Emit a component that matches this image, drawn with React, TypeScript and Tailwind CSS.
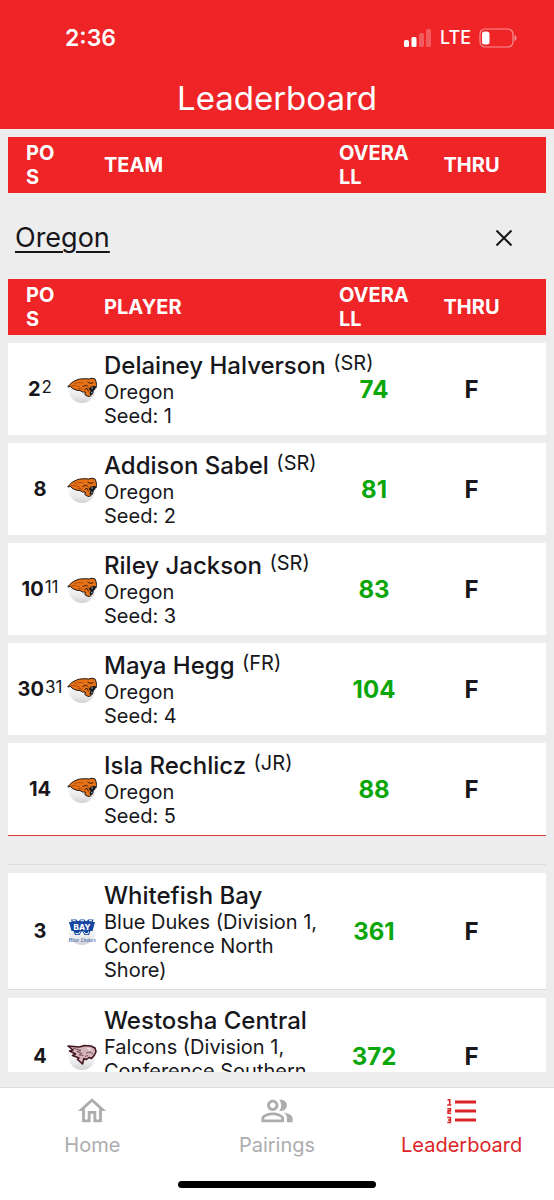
import React, { useId, useState } from 'react';
import { MdOutlineHome, MdOutlinePeopleAlt } from 'react-icons/md';

interface Player {
  pos: string;
  projected?: string;
  name: string;
  grade: string;
  team: string;
  seed: number;
  score: number;
  thru: string;
}

interface Team {
  pos: string;
  name: string;
  details: string;
  score: number;
  thru: string;
  logo: React.ComponentType;
}

const players: Player[] = [
  { pos: '2', projected: '2', name: 'Delainey Halverson', grade: 'SR', team: 'Oregon', seed: 1, score: 74, thru: 'F' },
  { pos: '8', name: 'Addison Sabel', grade: 'SR', team: 'Oregon', seed: 2, score: 81, thru: 'F' },
  { pos: '10', projected: '11', name: 'Riley Jackson', grade: 'SR', team: 'Oregon', seed: 3, score: 83, thru: 'F' },
  { pos: '30', projected: '31', name: 'Maya Hegg', grade: 'FR', team: 'Oregon', seed: 4, score: 104, thru: 'F' },
  { pos: '14', name: 'Isla Rechlicz', grade: 'JR', team: 'Oregon', seed: 5, score: 88, thru: 'F' },
];

const teams: Team[] = [
  {
    pos: '3',
    name: 'Whitefish Bay',
    details: 'Blue Dukes (Division 1, Conference North Shore)',
    score: 361,
    thru: 'F',
    logo: BlueDukesLogo,
  },
  {
    pos: '4',
    name: 'Westosha Central',
    details: 'Falcons (Division 1, Conference Southern Lakes)',
    score: 372,
    thru: 'F',
    logo: FalconsLogo,
  },
];

const tabs = [
  { label: 'Home', icon: MdOutlineHome },
  { label: 'Pairings', icon: MdOutlinePeopleAlt },
  { label: 'Leaderboard', icon: RankingIcon },
];

function RankingIcon({ className }: { className?: string }) {
  return (
    <svg viewBox="0 0 34 34" className={className} fill="none" stroke="currentColor" aria-hidden="true">
      <path d="M10 8H31M10 17H31M10 26H31" strokeWidth="2.800" />
      <path
        d="M2.500 5.800H4.700V11M2.200 11H6.300M2.300 14.700H5.400V16.900H3.100V19.300H6.200M2.300 23.500H5.400V28.500H2.300M3 26H5.400"
        strokeWidth="1.600"
      />
    </svg>
  );
}

// Golf ball that sits behind every team logo
function Ball() {
  const id = useId();
  return (
    <>
      <defs>
        <linearGradient id={id} x1="0" y1="0" x2="0" y2="1">
          <stop offset="0.3" stopColor="#ffffff" />
          <stop offset="0.75" stopColor="#e9e9eb" />
          <stop offset="1" stopColor="#d2d2d5" />
        </linearGradient>
      </defs>
      <circle cx="15" cy="14.5" r="13.5" fill={`url(#${id})`} />
    </>
  );
}

function PantherLogo() {
  return (
    <svg viewBox="0 0 30 30" className="block size-[30px]" role="img" aria-label="Oregon logo">
      <Ball />
      <path
        d="M.8 12C3 8.500 6 6.500 9.500 5C13 3.500 18 3.600 22 4L25 3.200L28 4L29 6.500L29.500 9.500L29 13L27.800 11.500L26 11.800L25 14.500L26 17L24.500 20L22.500 21.500L20 21L17.800 19.500L18.500 17L15.500 17L13 15.500L10 15.300L6 13.800L3.500 11.500Z"
        fill="#e87216"
        stroke="#1d1410"
        strokeWidth="1"
        strokeLinejoin="round"
      />
      <path d="M21.500 14L24 11.500L28.500 11.200L28.500 14L26.500 16L26 19L23 20L22.500 18L23.600 15.800Z" fill="#15181c" />
      <path d="M24.300 12.500L25 14.300L26 12.500M24 18.200L24.900 16.400L25.500 18" fill="#d5eaf0" />
      <path
        d="M7 9C10 7.300 14 7 17 8.300M4 11.200C7 10 10 10.800 13 12.200M11 13.300L15.500 14"
        fill="none"
        stroke="#a04a10"
        strokeWidth="0.8"
      />
      <path d="M15.500 11.500L19.500 10.200L21.500 12M20.500 7L24 8.500L26.500 7.300M17.500 14.500L20 13.300L21.500 16.500" fill="none" stroke="#2a160b" strokeWidth="0.9" />
    </svg>
  );
}

function BlueDukesLogo() {
  return (
    <svg viewBox="0 0 30 30" className="block size-[30px]" role="img" aria-label="Whitefish Bay logo">
      <Ball />
      <path
        d="M4 2.500H9.500L10.500 4H12L13 2.500H17.500L18.500 4H20L21 2.500H26.500L25.800 5H28L25.500 14H23.500L22 18H17.500L15.500 14.500H14.500L12.500 18H8L6.500 14H4.500L2 5H4.700Z"
        fill="#1746a0"
      />
      <path d="M5.500 3.700H8.700M13.500 3.700H17M22 3.700H25M8.300 16L9 16.700H11.800L13.200 14.500M16.800 14.500L18.200 16.700H21L21.700 14.500" fill="none" stroke="#fff" strokeWidth="1" />
      <text x="15" y="12.500" textAnchor="middle" fontSize="8" fontWeight="800" fill="#fff" fontFamily="Inter, sans-serif">
        BAY
      </text>
      <text
        x="15"
        y="25"
        textAnchor="middle"
        fontSize="6"
        fontStyle="italic"
        fill="#2b55a5"
        fontFamily="Liberation Serif, serif"
      >
        Blue Dukes
      </text>
    </svg>
  );
}

function FalconsLogo() {
  return (
    <svg viewBox="0 0 30 30" className="block size-[30px]" role="img" aria-label="Westosha Central logo">
      <Ball />
      <path
        d="M1 4L12.500 5L17.500 3.500L24 4L28 6L29 9.500L27.500 13L24.500 16.500L22 15.500L19.500 17.500L17 16.500L15.500 22L10.500 17.500L12 16L5.500 13.500L8.500 12L2.500 9L6 8Z"
        fill="#d3b4ba"
        stroke="#43161f"
        strokeWidth="1.600"
        strokeLinejoin="round"
      />
      <path
        d="M6 6L14 8.500L10 9.500L15 11.500L12 12.800L16.500 13.500M19 11L23 10L26 12M18 14.500L21 13.500"
        fill="none"
        stroke="#6b3a45"
        strokeWidth="0.800"
      />
      <path d="M19 5.500L25 6.500L22.500 9Z" fill="#eadadd" />
    </svg>
  );
}

function StatusBar() {
  return (
    <div className="flex items-center justify-between pl-[65px] pr-[37px] pt-6">
      <span className="text-[23px] leading-7 font-semibold">2:36</span>
      <div className="flex items-center gap-2">
        <svg viewBox="0 0 28 18" className="h-[18px] w-7" role="img" aria-label="Signal: 2 of 4 bars">
          <rect x="0" y="11" width="5" height="7" rx="1.500" fill="#fff" />
          <rect x="7.500" y="8" width="5" height="10" rx="1.500" fill="#fff" />
          <rect x="15" y="4" width="5" height="14" rx="1.500" fill="#fff" opacity="0.250" />
          <rect x="22" y="0" width="5" height="18" rx="1.500" fill="#fff" opacity="0.250" />
        </svg>
        <span className="text-[18px] leading-7 font-medium">LTE</span>
        <svg viewBox="0 0 38 20" className="h-5 w-[38px]" role="img" aria-label="Battery low">
          <rect x="1" y="1" width="33" height="18" rx="5" fill="none" stroke="#fff" strokeOpacity="0.500" strokeWidth="1.200" />
          <rect x="3" y="3.500" width="7.500" height="13" rx="2.500" fill="#fff" />
          <path d="M35.500 7Q37.500 7.500 37.500 10T35.500 13Z" fill="#fff" opacity="0.500" />
        </svg>
      </div>
    </div>
  );
}

function BoardColumns() {
  return (
    <colgroup>
      <col className="w-[56px]" />
      <col className="w-[40px]" />
      <col />
      <col className="w-[86px]" />
      <col className="w-[129px]" />
    </colgroup>
  );
}

function BoardHead({ label }: { label: string }) {
  return (
    <thead>
      <tr className="bg-[#ee2427] text-left text-[20px] leading-6 font-semibold text-white">
        <th scope="col" className="py-1 pl-[18px] pr-2 break-all">POS</th>
        <td />
        <th scope="col">{label}</th>
        <th scope="col" className="px-2 py-1 break-all">OVERALL</th>
        <th scope="col" className="pr-5 text-center">THRU</th>
      </tr>
    </thead>
  );
}

interface BoardRowProps {
  pos: string;
  projected?: string;
  logo: React.ReactNode;
  score: number;
  thru: string;
  border?: string;
  children: React.ReactNode;
}

function BoardRow({ pos, projected, logo, score, thru, border = '', children }: BoardRowProps) {
  return (
    <tr className="bg-white">
      <td className={`pl-2 text-center text-[20px] font-bold whitespace-nowrap ${border}`}>
        {pos}
        {projected && <sup className="top-0 pl-px align-[3px] text-[17px] leading-none font-normal">{projected}</sup>}
      </td>
      <td className={`pt-[2px] pl-[3px] ${border}`}>{logo}</td>
      <td className={`pt-[9px] pb-[7px] text-[20px] leading-6 ${border}`}>{children}</td>
      <td className={`pt-[2px] text-center text-[24px] font-bold text-[#0aa60a] ${border}`}>{score}</td>
      <td className={`pt-[2px] pr-5 text-center text-[24px] font-bold ${border}`}>{thru}</td>
    </tr>
  );
}

function ExpandedTeam({ onClose }: { onClose: () => void }) {
  return (
    <>
      <div className="flex h-[70px] items-center justify-between pt-1 pl-[7px] pr-[30px]">
        <a href="#oregon" className="text-[27px] leading-8 underline decoration-2 underline-offset-4">
          Oregon
        </a>
        <button type="button" onClick={onClose} aria-label="Close" className="p-1">
          <svg viewBox="0 0 16 16" className="size-4" fill="none" stroke="currentColor" strokeWidth="2">
            <path d="M0.500 0.500L15.500 15.500M15.500 0.500L0.500 15.500" />
          </svg>
        </button>
      </div>
      <table className="w-full table-fixed border-separate border-spacing-x-0 border-spacing-y-2">
        <BoardColumns />
        <BoardHead label="PLAYER" />
        <tbody>
          {players.map((player, index) => (
            <BoardRow
              key={player.name}
              pos={player.pos}
              projected={player.projected}
              logo={<PantherLogo />}
              score={player.score}
              thru={player.thru}
              border={index === players.length - 1 ? 'border-b border-b-[#e0393b]' : ''}
            >
              <div className="text-[24px] leading-7 font-medium whitespace-nowrap">
                {player.name}{' '}
                <sup className="top-0 pl-px align-[4px] text-[20px] leading-none font-normal">({player.grade})</sup>
              </div>
              <div>{player.team}</div>
              <div>Seed: {player.seed}</div>
            </BoardRow>
          ))}
        </tbody>
      </table>
    </>
  );
}

export default function App() {
  const [activeTab, setActiveTab] = useState('Leaderboard');
  const [expanded, setExpanded] = useState(true);

  return (
    <div className="flex h-screen flex-col bg-[#ededed] font-['Inter',sans-serif] text-[#17171b]">
      {/* Header */}
      <header className="shrink-0 bg-[#ee2427] pb-[13px] text-white">
        <StatusBar />
        <h1 className="pt-7 text-center text-[33px] leading-9">Leaderboard</h1>
      </header>

      {/* Board */}
      <main className="mb-[15px] min-h-0 flex-1 overflow-y-auto px-2 [scrollbar-width:none]">
        <table className="w-full table-fixed border-separate border-spacing-x-0 border-spacing-y-2">
          <BoardColumns />
          <BoardHead label="TEAM" />
          <tbody>
            {expanded && (
              <tr>
                <td colSpan={5} className="border-b border-b-[#dcdce0] pb-5">
                  <ExpandedTeam onClose={() => setExpanded(false)} />
                </td>
              </tr>
            )}
            {teams.map(({ logo: Logo, ...team }) => (
              <BoardRow
                key={team.name}
                pos={team.pos}
                logo={<Logo />}
                score={team.score}
                thru={team.thru}
                border="border-b border-b-[#dcdce0]"
              >
                <div className="text-[24px] leading-7 font-medium">{team.name}</div>
                <div>{team.details}</div>
              </BoardRow>
            ))}
          </tbody>
        </table>
      </main>

      {/* Bottom tabs */}
      <nav className="shrink-0 border-t border-[#dedede] bg-white pb-3">
        <div className="flex pt-[6px]">
          {tabs.map(({ label, icon: Icon }) => (
            <button
              key={label}
              type="button"
              onClick={() => setActiveTab(label)}
              className={`flex flex-1 basis-0 flex-col items-center gap-[3px] text-[20px] leading-7 ${
                activeTab === label ? 'text-[#dc2427]' : 'text-[#adadaf]'
              }`}
            >
              <Icon className="size-[34px]" />
              {label}
            </button>
          ))}
        </div>
        <div className="mx-auto mt-[22px] h-[7px] w-[198px] rounded-full bg-black" />
      </nav>
    </div>
  );
}
